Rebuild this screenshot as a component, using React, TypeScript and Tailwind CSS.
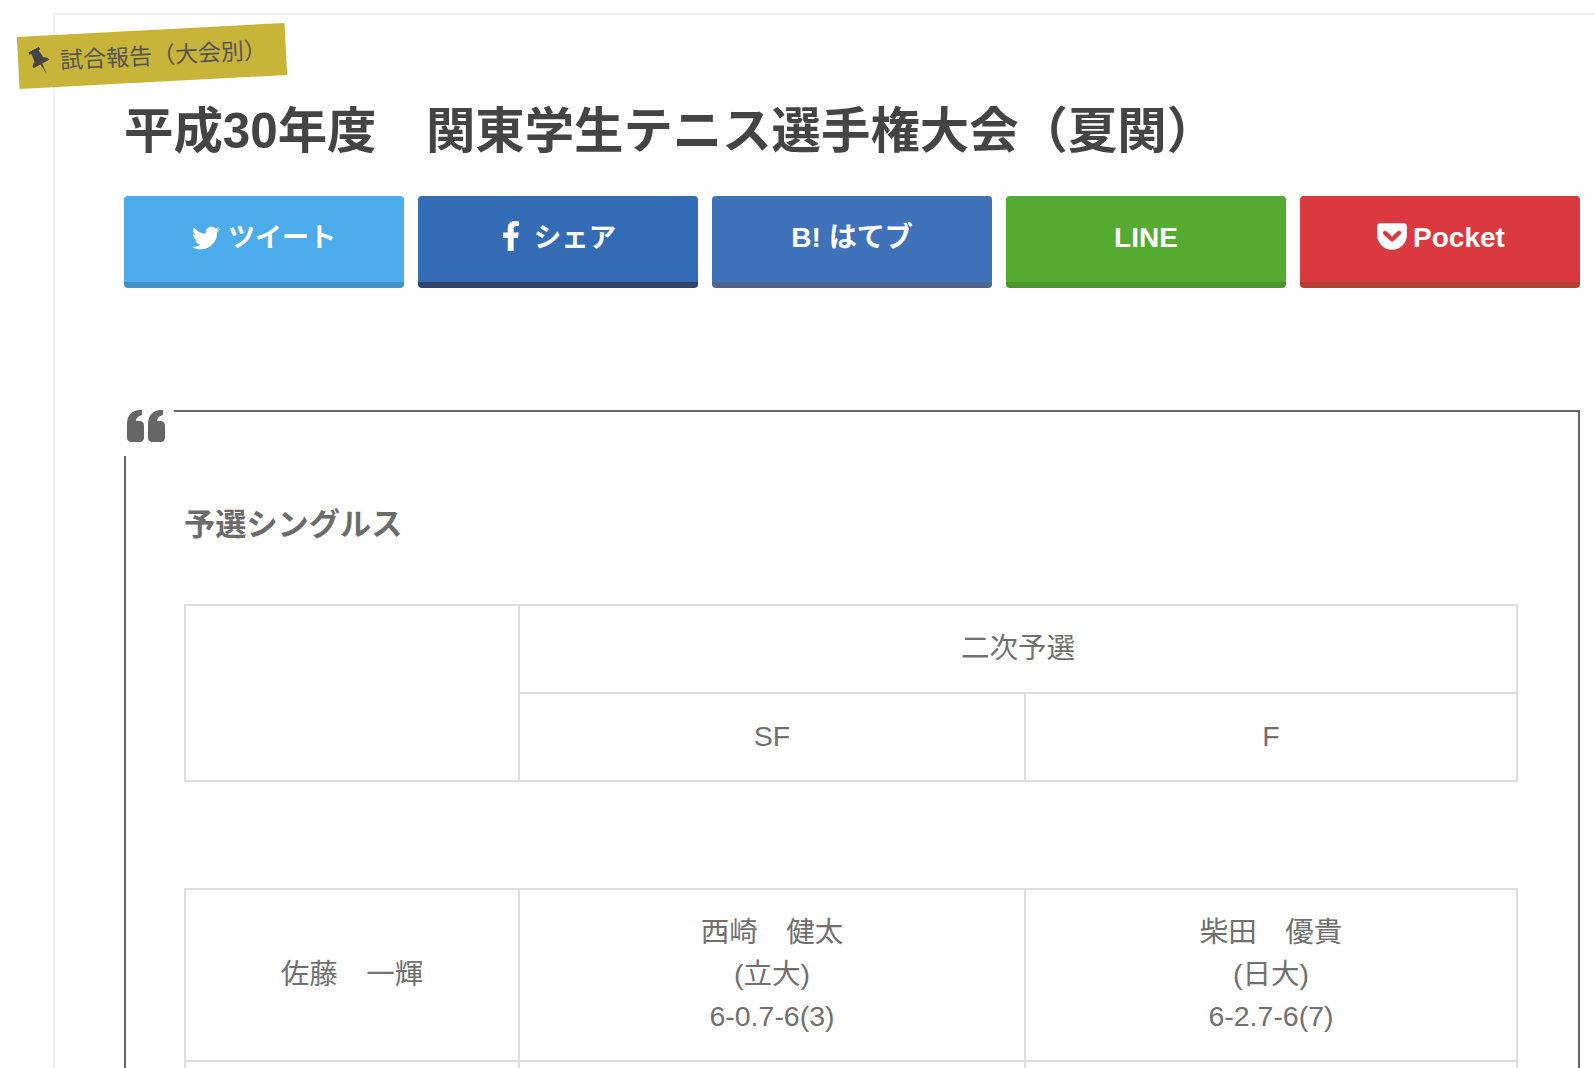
import { FaTwitter, FaFacebookF, FaGetPocket } from "react-icons/fa";

const fontStack = "font-['Liberation_Sans','Noto_Sans_CJK_JP',sans-serif]";

const ShareButton = ({ className, children }: { className: string; children: React.ReactNode }) => (
  <a className={`flex h-[92px] w-[280px] shrink-0 items-center justify-center gap-2 rounded-[4px] border-b-[6px] pb-[2px] text-[28px] font-bold text-white ${className}`}>
    {children}
  </a>
);

const PinIcon = () => (
  <svg viewBox="0 0 20 28" className="h-[28px] w-[20px] shrink-0 -rotate-[25deg] fill-[#444]">
    <path d="M4 0H16V3H14L15 11.5C17.5 12.5 19 14 19 16.5H11L10 28L9 16.5H1C1 14 2.5 12.5 5 11.5L6 3H4Z" />
  </svg>
);

const QuoteMark = () => (
  <svg viewBox="0 0 38 32" className="h-[32px] w-[38px] fill-[#666]">
    <path d="M0 14C0 6 4 1 12 0L15 0L15 5C11 6 9 8 9 11L13 11C15 11 17 13 17 15L17 28C17 30 15 32 13 32L4 32C2 32 0 30 0 28Z" />
    <path d="M21 14C21 6 25 1 33 0L36 0L36 5C32 6 30 8 30 11L34 11C36 11 38 13 38 15L38 28C38 30 36 32 34 32L25 32C23 32 21 30 21 28Z" />
  </svg>
);

const Cell = ({ children, rowSpan, colSpan }: { children?: React.ReactNode; rowSpan?: number; colSpan?: number }) => (
  <td rowSpan={rowSpan} colSpan={colSpan} className="border-2 border-[#ddd] px-4 pb-[23px] pt-[21px] text-center align-middle">
    {children}
  </td>
);

const Cols = () => (
  <colgroup>
    <col className="w-[334px]" />
    <col className="w-[506px]" />
    <col className="w-[492px]" />
  </colgroup>
);

export default function App() {
  return (
    <div className={`h-[1068px] w-[1594px] overflow-hidden bg-white pl-[53px] pt-[13px] ${fontStack}`}>
      <article className="relative h-[1100px] border-l-2 border-t-2 border-[#f0f0f0] pl-[69px] pr-[14px]">
        {/* ribbon */}
        <div className="absolute left-[-37px] top-[15px] flex h-[52px] w-[268px] -rotate-3 items-center gap-[10px] bg-[#c8b439] pl-[12px] text-[23px] text-[#555]">
          <PinIcon />
          <span>試合報告（大会別）</span>
        </div>

        <h1 className="pt-[81px] text-[49.4px] font-bold leading-[70px] whitespace-nowrap text-[#444]">
          平成30年度　関東学生テニス選手権大会（夏関）
        </h1>

        <div className="mt-[30px] flex gap-[14px]">
          <ShareButton className="bg-[#4cabeb] border-[#3f92c6]">
            <FaTwitter className="h-[28px] w-[28px]" />
            <span className="text-[27px]">ツイート</span>
          </ShareButton>
          <ShareButton className="bg-[#336bb5] border-[#30436f]">
            <FaFacebookF className="mb-[4px] h-[30px] w-[30px]" />
            <span className="mr-[4px] text-[27.5px]">シェア</span>
          </ShareButton>
          <ShareButton className="bg-[#3f72b9] border-[#4e668f]">
            <span>B! はてブ</span>
          </ShareButton>
          <ShareButton className="bg-[#55ab32] border-[#4b962c]">
            <span>LINE</span>
          </ShareButton>
          <ShareButton className="bg-[#da3a3f] border-[#b3402f]">
            <FaGetPocket className="-mr-[4px] mb-[4px] h-[34px] w-[34px]" />
            <span>Pocket</span>
          </ShareButton>
        </div>

        <blockquote className="relative mt-[122px] h-[800px] border-l-2 border-r-2 border-t-2 border-[#666] pl-[58px] pr-[60px] text-[#6b6b6b]">
          <div className="absolute left-[-4px] top-[-4px] flex h-[48px] w-[52px] items-start justify-start bg-white pl-[5px] pt-[2px]">
            <QuoteMark />
          </div>

          <h3 className="pt-[90px] text-[31.2px] font-bold leading-[45px]">予選シングルス</h3>

          <table className="mt-[57px] w-[1332px] table-fixed border-collapse text-[28.5px] leading-[42px] text-[#707070]">
            <Cols />
            <tbody>
              <tr>
                <Cell rowSpan={2} />
                <Cell colSpan={2}>二次予選</Cell>
              </tr>
              <tr>
                <Cell>SF</Cell>
                <Cell>F</Cell>
              </tr>
            </tbody>
          </table>

          <table className="mt-[106px] w-[1332px] table-fixed border-collapse text-[28.5px] leading-[42px] text-[#707070]">
            <Cols />
            <tbody>
              <tr>
                <Cell>佐藤　一輝</Cell>
                <Cell>
                  西崎　健太
                  <br />
                  (立大)
                  <br />
                  6-0.7-6(3)
                </Cell>
                <Cell>
                  柴田　優貴
                  <br />
                  (日大)
                  <br />
                  6-2.7-6(7)
                </Cell>
              </tr>
              <tr>
                <Cell>&nbsp;</Cell>
                <Cell>&nbsp;</Cell>
                <Cell>&nbsp;</Cell>
              </tr>
            </tbody>
          </table>
        </blockquote>
      </article>
    </div>
  );
}
